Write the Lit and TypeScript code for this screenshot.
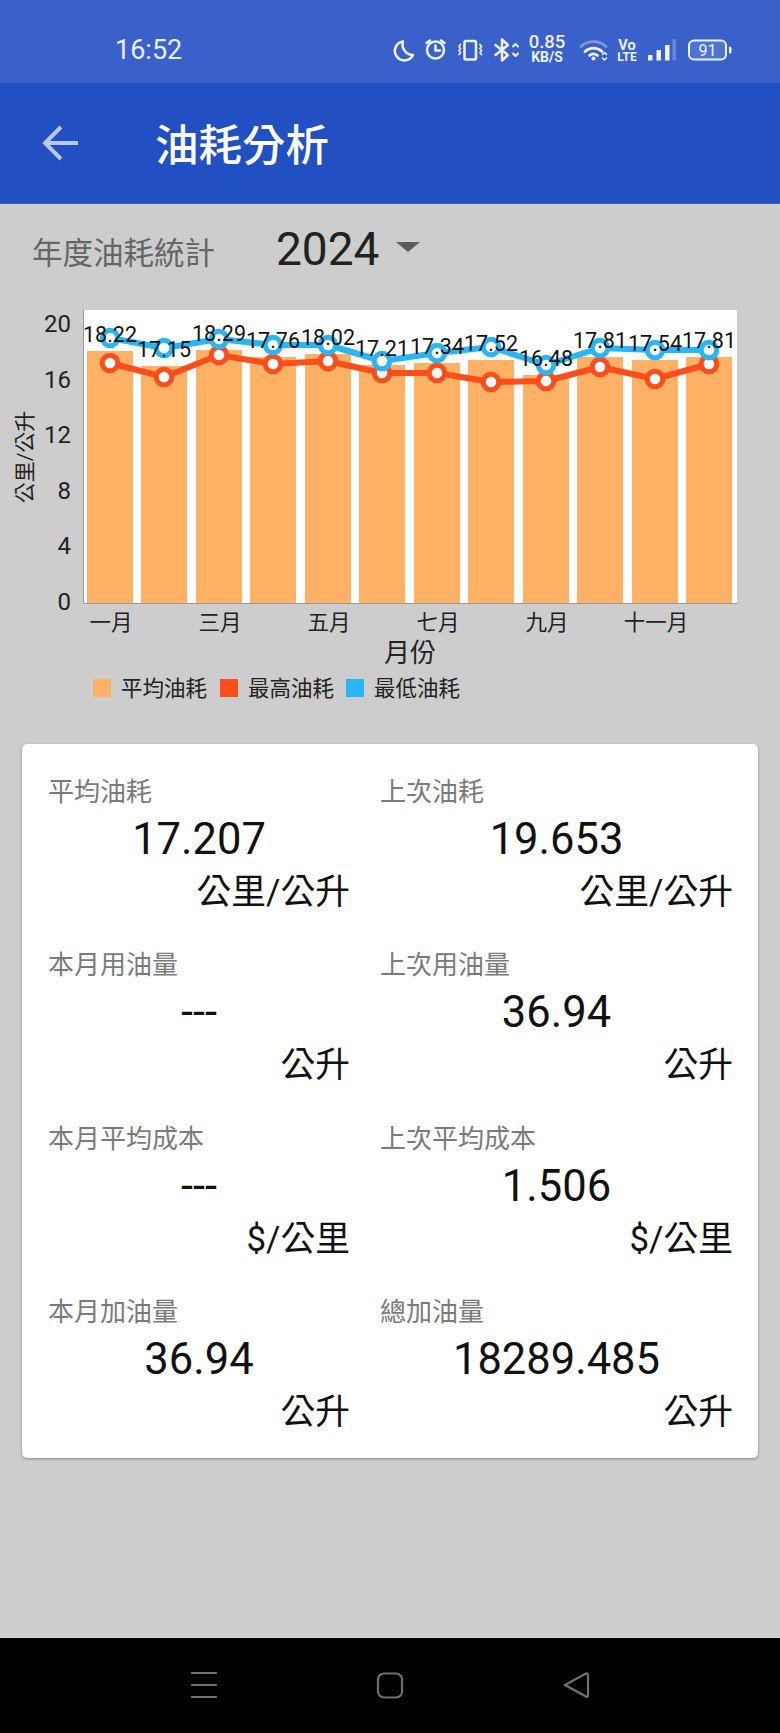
import { LitElement, html, css, svg } from "lit";
import { customElement } from "lit/decorators.js";

const xs = [110, 164, 219, 273, 328, 382, 437, 491, 546, 600, 655, 709];
const barTop = [351, 366, 350, 357, 354, 365, 363, 360, 375, 357, 360, 357];
const blue = [338, 348, 339, 345, 345, 361, 353, 347, 365, 348, 350, 350];
const red = [363, 377, 355, 364, 361, 373, 373, 382, 381, 367, 379, 364];
const labels = ["18.22", "17.15", "18.29", "17.76", "18.02", "17.21", "17.34", "17.52", "16.48", "17.81", "17.54", "17.81"];
const labelY = [334, 349, 333, 340, 337, 348, 346, 343, 358, 340, 343, 340];
const yTicks: [string, number][] = [["20", 323], ["16", 379], ["12", 434], ["8", 490], ["4", 545], ["0", 601]];
const xTicks: [string, number][] = [["一月", 111], ["三月", 220], ["五月", 329], ["七月", 438], ["九月", 547], ["十一月", 656]];
const legend: [string, string, number][] = [["平均油耗", "#ffb266", 93], ["最高油耗", "#ff4d1c", 220], ["最低油耗", "#29b6f6", 346]];

const stats = [
  ["平均油耗", "17.207", "公里/公升"],
  ["上次油耗", "19.653", "公里/公升"],
  ["本月用油量", "---", "公升"],
  ["上次用油量", "36.94", "公升"],
  ["本月平均成本", "---", "$/公里"],
  ["上次平均成本", "1.506", "$/公里"],
  ["本月加油量", "36.94", "公升"],
  ["總加油量", "18289.485", "公升"],
];

@customElement("app-root")
export class AppRoot extends LitElement {
  static styles = css`
    :host {
      display: block;
      width: 780px;
      height: 1733px;
      font-family: Roboto, "Noto Sans CJK TC", sans-serif;
    }
    .page { display: flex; flex-direction: column; height: 1733px; background: #cdcdcd; }
    .status {
      height: 83px; flex: none; background: #3a60c9; color: #e9eefa;
      position: relative; box-sizing: border-box; padding: 35px 0 0 115px;
    }
    .time { display: block; font-size: 27px; line-height: 30px; }
    .status-icons { position: absolute; left: 0; top: 0; }
    .appbar {
      height: 121px; flex: none; background: #224fc1; display: flex; align-items: center;
      box-sizing: border-box; padding: 0 0 0 42px; border-bottom: 1px solid #3a62c4;
    }
    .back { width: 38px; height: 38px; flex: none; display: block; }
    .title { margin-left: 75px; font-size: 43.500px; font-weight: 500; color: #fff; line-height: 50px; margin-top: 7px; }
    .content { flex: 1; display: flex; flex-direction: column; }
    .filter { display: flex; align-items: center; height: 90px; flex: none; padding-left: 32px; }
    .filter-label { font-size: 30.500px; color: #666; line-height: 40px; width: 244px; margin-top: 10px; }
    .year { font-size: 46px; color: #212121; line-height: 54px; }
    .caret {
      width: 0; height: 0; margin-left: 17px; margin-top: -4px;
      border-left: 12px solid transparent; border-right: 12px solid transparent; border-top: 10px solid #5c5c5c;
    }
    .chart { display: block; width: 780px; height: 450px; flex: none; font-family: Roboto, "Noto Sans CJK TC", sans-serif; }
    .tick { font-size: 24px; fill: #222; }
    .xtick { font-size: 21.500px; fill: #222; }
    .axis-title { font-size: 26px; fill: #222; }
    .y-title { font-size: 21px; fill: #222; }
    .point { font-size: 21.500px; fill: #111; }
    .legend { font-size: 21.500px; fill: #222; }
    .card {
      width: 736px; height: 714px; flex: none; box-sizing: border-box; margin-left: 22px;
      background: #fff; border-radius: 5px; box-shadow: 0 1px 3px rgba(0,0,0,.35);
      padding: 26px 25px 0 26px; display: grid; grid-template-columns: 332px 353px; grid-auto-rows: 173.3px;
    }
    .stat { display: flex; flex-direction: column; width: 100%; }
    .stat:nth-child(odd) { width: 302px; }
    .stat-label { font-size: 26px; line-height: 44px; color: #7a7a7a; }
    .stat-value { font-size: 43.500px; line-height: 50px; margin-top: 1px; color: #111; text-align: center; }
    .stat-unit { font-size: 34.800px; line-height: 54px; color: #111; text-align: right; }
    .nav { height: 96px; flex: none; background: #000; border-top: 1px solid #d8d8d8; box-sizing: border-box; }
    .nav svg { display: block; }
  `;

  private statusIcons() {
    return html`<svg class="status-icons" width="780" height="83" viewBox="0 0 780 83" fill="none" stroke="#eef2fb" stroke-width="2.500" stroke-linecap="round" stroke-linejoin="round">
      <path d="M403 41.500a9.500 9.500 0 1 0 10 13.500 a10.500 10.500 0 0 1 -10 -13.500z" />
      <circle cx="435.500" cy="50" r="8.500" /><path d="M435.500 45.500v5h4.500M426.500 43l3.500 -2.500M444.500 43l-3.500 -2.500" />
      <rect x="464.500" y="41" width="11.500" height="18.500" rx="1.500" />
      <path d="M460.500 44.500l-1.500 2 1.500 2 -1.500 2 1.500 2 -1.500 2M480 44.500l1.500 2 -1.500 2 1.500 2 -1.500 2 1.500 2" stroke-width="1.800" />
      <path d="M495.500 45l12.500 10 -6 5.500v-21l6 5.500 -12.500 10" />
      <path d="M513 46.500l2.500 -2.500 2.500 2.500M513 53.500l2.500 2.500 2.500 -2.500" stroke-width="2" />
      <path d="M581 46.500c7 -6.500 18 -6.500 25 0" stroke="#7f97dc" stroke-width="2.800" />
      <path d="M585 51.500c5 -4.500 12 -4.500 17 0M589.500 55.500c2.500 -2 5.500 -2 8 0" stroke-width="2.800" />
      <circle cx="593.500" cy="58.500" r="2" fill="#eef2fb" stroke="none" />
      <path d="M602.500 54.500l2 -2 2 2M602.500 58l2 2 2 -2" stroke-width="1.600" />
      <rect x="648" y="55" width="4.500" height="5.500" rx=".5" fill="#eef2fb" stroke="none" />
      <rect x="656.500" y="50" width="4.500" height="10.500" rx=".5" fill="#eef2fb" stroke="none" />
      <rect x="665" y="45" width="4.500" height="15.500" rx=".5" fill="#eef2fb" stroke="none" />
      <rect x="672.500" y="39" width="3.500" height="21.500" rx=".5" fill="#6a86d6" stroke="none" />
      <rect x="689" y="40.500" width="37" height="19" rx="5" stroke-width="2" fill="#4f73d2" />
      <path d="M729 46.500c1.500 0 2.500 .5 2.500 1.500v4c0 1 -1 1.500 -2.500 1.500z" fill="#eef2fb" stroke="none" />
      <g fill="#eef2fb" stroke="none" font-family="Roboto, sans-serif">
        <text x="547" y="47.500" text-anchor="middle" font-size="18.500" font-weight="500">0.85</text>
        <text x="547" y="62" text-anchor="middle" font-size="14" font-weight="700">KB/S</text>
        <text x="627" y="49.500" text-anchor="middle" font-size="14.500" font-weight="700">Vo</text>
        <text x="627" y="60.500" text-anchor="middle" font-size="12" font-weight="700">LTE</text>
        <text x="707.500" y="55.500" text-anchor="middle" font-size="16">91</text>
      </g>
    </svg>`;
  }

  private chart() {
    const pts = (a: number[]) => a.map((y, i) => `${xs[i]},${y}`).join(" ");
    const T = 294; // page y of the chart's top edge
    return svg`<svg class="chart" viewBox="0 ${T} 780 450">
      <rect x="83" y="310" width="654" height="293" fill="#fff" />
      ${xs.map((x, i) => svg`<rect x=${x - 23} y=${barTop[i]} width="46" height=${603 - barTop[i]} fill="#ffb266" />`)}
      <path d="M83.500 310V603.500H737" fill="none" stroke="#9a9a9a" stroke-width="1" />
      <polyline points=${pts(red)} fill="none" stroke="#ff4d1c" stroke-width="6" stroke-linejoin="round" />
      ${red.map((y, i) => svg`<circle cx=${xs[i]} cy=${y} r="7.800" fill="#fff" stroke="#ff4d1c" stroke-width="5" />`)}
      <polyline points=${pts(blue)} fill="none" stroke="#29b6f6" stroke-width="6" stroke-linejoin="round" />
      ${blue.map((y, i) => svg`<circle cx=${xs[i]} cy=${y} r="7.800" fill="#fff" stroke="#29b6f6" stroke-width="5" />`)}
      ${labels.map((t, i) => svg`<text class="point" x=${xs[i]} y=${labelY[i] + 7.500} text-anchor="middle">${t}</text>`)}
      ${yTicks.map(([t, y]) => svg`<text class="tick" x="71" y=${y + 8.500} text-anchor="end">${t}</text>`)}
      ${xTicks.map(([t, x]) => svg`<text class="xtick" x=${x} y="630" text-anchor="middle">${t}</text>`)}
      <text class="axis-title" x="410" y="662" text-anchor="middle">月份</text>
      <text class="y-title" transform="translate(31.500 457) rotate(-90)" text-anchor="middle">公里/公升</text>
      ${legend.map(([t, c, x]) => svg`<rect x=${x} y="679" width="18" height="18" fill=${c} />
        <text class="legend" x=${x + 28} y="695.500">${t}</text>`)}
    </svg>`;
  }

  render() {
    return html`<div class="page">
      <div class="status"><span class="time">16:52</span>${this.statusIcons()}</div>
      <div class="appbar">
        <svg class="back" viewBox="0 0 38 38" fill="none" stroke="#b9c8f1" stroke-width="4" stroke-linejoin="miter">
          <path d="M3 19H36M19 3L3 19l16 16" />
        </svg>
        <span class="title">油耗分析</span>
      </div>
      <div class="content">
        <div class="filter">
          <span class="filter-label">年度油耗統計</span>
          <span class="year">2024</span>
          <span class="caret"></span>
        </div>
        ${this.chart()}
        <div class="card">
          ${stats.map(([l, v, u]) => html`<div class="stat">
            <div class="stat-label">${l}</div>
            <div class="stat-value">${v}</div>
            <div class="stat-unit">${u}</div>
          </div>`)}
        </div>
      </div>
      <div class="nav">
        <svg width="780" height="95" viewBox="0 1638 780 95" fill="none" stroke="#707070" stroke-width="2.200" stroke-linecap="round" stroke-linejoin="round">
          <path d="M192 1673H216M192 1685H216M192 1697H216" />
          <rect x="378" y="1673.500" width="24" height="24" rx="6" />
          <path d="M565 1685L586 1673.500Q588 1673 588 1675V1695Q588 1697.500 586 1696.500Z" />
        </svg>
      </div>
    </div>`;
  }
}
